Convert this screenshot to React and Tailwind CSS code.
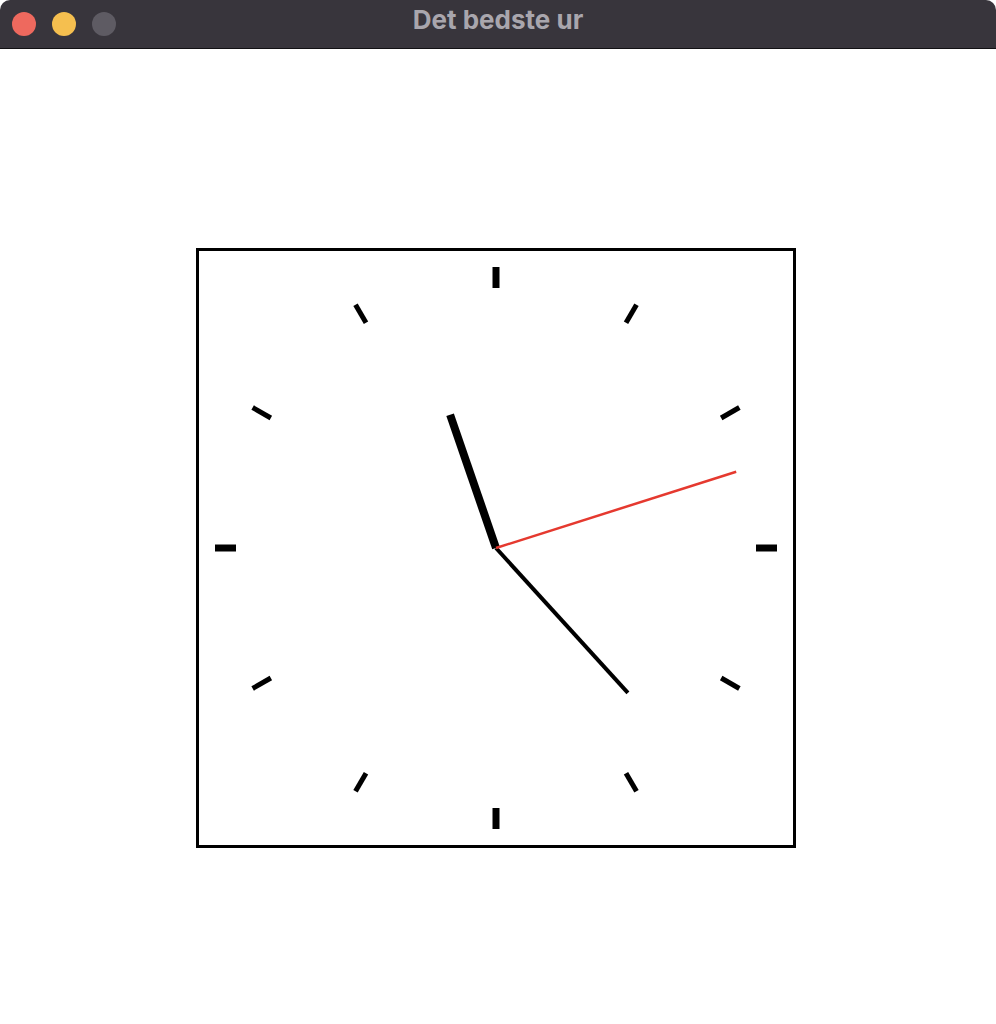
import React from "react";

const CX = 297;
const CY = 297;

const point = (deg, r) => {
  const a = (deg * Math.PI) / 180;
  return [CX + r * Math.sin(a), CY - r * Math.cos(a)];
};

const Hand = ({ deg, length, width, color }) => {
  const [x, y] = point(deg, length);
  return (
    <line x1={CX} y1={CY} x2={x} y2={y} stroke={color} strokeWidth={width} strokeLinecap="butt" />
  );
};

const Ticks = () => {
  const ticks = [];
  for (let i = 0; i < 12; i++) {
    const deg = i * 30;
    const [x1, y1] = point(deg, 260);
    const [x2, y2] = point(deg, 281);
    ticks.push(
      <line key={i} x1={x1} y1={y1} x2={x2} y2={y2} stroke="#000" strokeWidth={i % 3 === 0 ? 7 : 5} />
    );
  }
  return <g>{ticks}</g>;
};

const TitleBar = () => (
  <div className="relative h-[49px] bg-[#38353c] border-b border-[#121114] rounded-t-[10px] flex items-center">
    <div className="flex items-center gap-4 pl-3">
      <span className="w-6 h-6 rounded-full bg-[#ee695e]" />
      <span className="w-6 h-6 rounded-full bg-[#f5bf4f]" />
      <span className="w-6 h-6 rounded-full bg-[#5e5b63]" />
    </div>
    <div
      className="absolute inset-x-0 top-0 h-[38px] flex items-center justify-center text-[26px] font-bold text-[#a9a6ad] pointer-events-none"
      style={{ fontFamily: "Inter, 'Noto Sans', sans-serif" }}
    >
      Det bedste ur
    </div>
  </div>
);

export default function App() {
  return (
    <div className="min-h-screen bg-white">
      <TitleBar />
      <div className="pl-[196px] pt-[199px]">
        <div className="w-[600px] h-[600px] border-[3px] border-black bg-white">
          <svg width="594" height="594" viewBox="0 0 594 594">
            <Ticks />
            <Hand deg={-19} length={141} width={8} color="#000" />
            <Hand deg={137.7} length={196} width={4} color="#000" />
            <Hand deg={72.4} length={252} width={2.5} color="#e5392f" />
          </svg>
        </div>
      </div>
    </div>
  );
}
